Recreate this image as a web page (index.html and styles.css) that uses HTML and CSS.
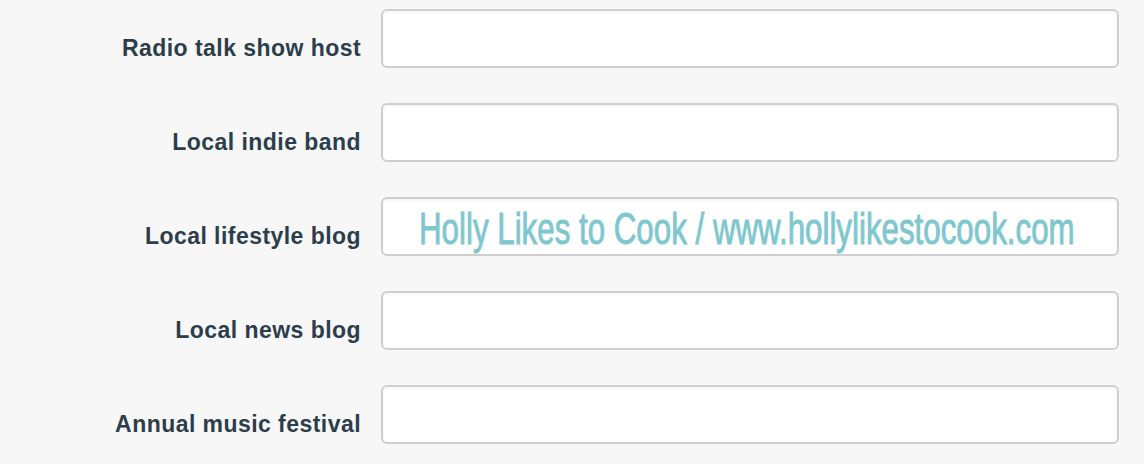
FILE: index.html
```html
<!DOCTYPE html>
<html>
<head>
<meta charset="utf-8">
<link rel="stylesheet" href="styles.css">
</head>
<body>
<form class="form">
  <div class="row">
    <label class="label">Radio talk show host</label>
    <div class="field"></div>
  </div>
  <div class="row">
    <label class="label">Local indie band</label>
    <div class="field"></div>
  </div>
  <div class="row">
    <label class="label">Local lifestyle blog</label>
    <div class="field"><span class="value">Holly Likes to Cook / www.hollylikestocook.com</span></div>
  </div>
  <div class="row">
    <label class="label">Local news blog</label>
    <div class="field"></div>
  </div>
  <div class="row">
    <label class="label">Annual music festival</label>
    <div class="field"></div>
  </div>
</form>
</body>
</html>
```
FILE: styles.css
```css
html, body {
  margin: 0;
  padding: 0;
  background: #f7f7f7;
}
.form {
  display: flex;
  flex-direction: column;
  gap: 35px;
  padding-top: 9px;
}
.row {
  display: grid;
  grid-template-columns: 361px 738px;
  column-gap: 20px;
  align-items: end;
}
.label {
  text-align: right;
  font-family: "Liberation Sans", Arial, sans-serif;
  font-weight: bold;
  font-size: 23px;
  letter-spacing: 0.45px;
  color: #2c3e4c;
  line-height: 1;
  padding-bottom: 8px;
}
.field {
  height: 55px;
  background: #fff;
  border: 2px solid #cfcfcf;
  border-radius: 6px;
  box-shadow: inset 0 2px 3px rgba(0,0,0,0.04);
  display: flex;
  align-items: center;
  overflow: hidden;
}
.value {
  font-family: "Liberation Sans Narrow", "Liberation Sans", sans-serif;
  font-size: 42px;
  color: #7ec7cf;
  -webkit-text-stroke: 0.9px #7ec7cf;
  white-space: nowrap;
  display: inline-block;
  transform-origin: left center;
  transform: scale(0.745, 1.05);
  margin-left: 36px;
  margin-top: 4px;
}
```
